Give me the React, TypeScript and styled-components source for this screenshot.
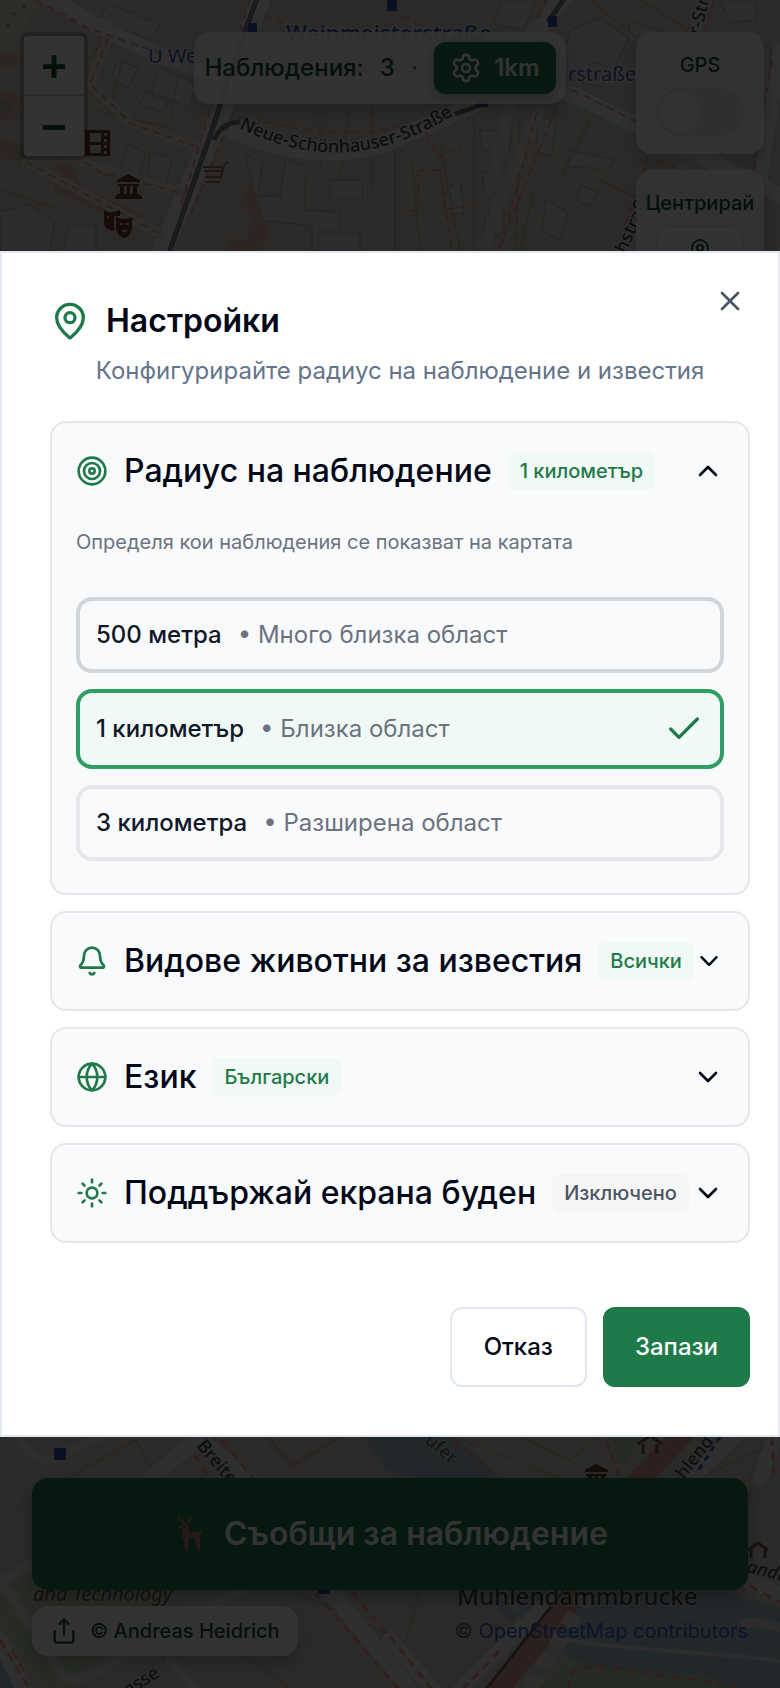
import React, { useState } from "react";
import styled, { createGlobalStyle } from "styled-components";
import {
  Bell,
  Check,
  ChevronDown,
  ChevronUp,
  Globe,
  MapPin,
  Settings,
  Share,
  Sun,
  Target,
  X,
} from "lucide-react";

const green = "#1f7a4a";

const GlobalStyle = createGlobalStyle`
  *, *::before, *::after { box-sizing: border-box; }
  body {
    margin: 0;
    color: #020817;
    font-family: Inter, "Noto Sans", sans-serif;
    font-size: 24px;
    line-height: 36px;
  }
  button { font: inherit; color: inherit; cursor: pointer; }
  h2, h3, p { margin: 0; }
`;

/* ---------- Map screen ---------- */

const Screen = styled.main`
  position: relative;
  min-height: 100vh;
  display: flex;
  flex-direction: column;
  justify-content: space-between;
  overflow: hidden;
  background: #e4dfda;
`;

const MapCanvas = styled.svg`
  position: absolute;
  inset: 0;
  width: 100%;
  height: 100%;
`;

const TopControls = styled.div`
  position: relative;
  display: grid;
  grid-template-columns: 1fr auto 1fr;
  align-items: start;
  padding: 32px 16px 0 20px;
`;

const ZoomControl = styled.div`
  justify-self: start;
  display: flex;
  flex-direction: column;
  border: 4px solid rgba(0, 0, 0, 0.2);
  border-radius: 8px;
  background-clip: padding-box;
`;

const ZoomButton = styled.button`
  width: 60px;
  height: 60px;
  padding: 8px 0 0;
  border: 0;
  background: #fff;
  color: #14532d;
  font: bold 44px/52px "Liberation Mono", monospace;

  &:first-child {
    border-bottom: 2px solid #ccc;
    border-radius: 4px 4px 0 0;
  }
  &:last-child {
    border-radius: 0 0 4px 4px;
  }
`;

const Panel = styled.div`
  border-radius: 16px;
  background: rgba(255, 255, 255, 0.88);
  color: #14532d;
  font-weight: 500;
  box-shadow: 0 8px 16px rgba(0, 0, 0, 0.2);
`;

const StatusBar = styled(Panel)`
  display: flex;
  align-items: center;
  height: 72px;
  margin-right: 24px;
  padding: 0 10px;
`;

const Count = styled.span`
  margin-left: 16px;
`;

const Dot = styled.span`
  margin: 0 16px;
  color: #64748b;
`;

const RadiusButton = styled.button`
  display: flex;
  align-items: center;
  gap: 12px;
  height: 52px;
  padding: 0 16px;
  border: 0;
  border-radius: 12px;
  background: ${green};
  color: #fff;
  font-weight: 600;
  box-shadow: 0 4px 12px rgba(0, 0, 0, 0.25);
`;

const SideControls = styled.div`
  justify-self: end;
  width: 128px;
  display: flex;
  flex-direction: column;
  gap: 16px;
`;

const SidePanel = styled(Panel)`
  display: flex;
  flex-direction: column;
  align-items: center;
  gap: 8px;
  padding: 18px 0;
  font-size: 20px;
  line-height: 30px;
`;

const GpsLabel = styled.label`
  display: flex;
  flex-direction: column;
  align-items: center;
  gap: 8px;
`;

const Toggle = styled.input`
  appearance: none;
  width: 88px;
  height: 48px;
  margin: 0;
  padding: 4px;
  border-radius: 24px;
  background: #e4e8ee;

  &::before {
    content: "";
    display: block;
    width: 40px;
    height: 40px;
    border-radius: 50%;
    background: #fff;
  }
  &:checked {
    background: ${green};
  }
  &:checked::before {
    margin-left: auto;
  }
`;

const CenterButton = styled.button`
  width: 88px;
  height: 56px;
  border: 2px solid #ececec;
  border-radius: 12px;
  background: #fff;
`;

const BottomControls = styled.div`
  position: relative;
  display: flex;
  flex-direction: column;
  gap: 16px;
  padding: 0 32px 32px;
`;

const ReportButton = styled.button`
  display: flex;
  align-items: center;
  justify-content: center;
  gap: 12px;
  height: 112px;
  border: 0;
  border-radius: 16px;
  background: ${green};
  color: #fff;
  font-size: 32px;
  font-weight: 600;
  box-shadow: 0 8px 16px rgba(0, 0, 0, 0.25);
`;

const Credits = styled.div`
  display: flex;
  align-items: center;
  justify-content: space-between;
  font-size: 20px;
  line-height: 30px;
`;

const Author = styled(Panel)`
  display: flex;
  align-items: center;
  gap: 12px;
  height: 50px;
  padding: 0 18px;
`;

const MapCredit = styled.span`
  color: #666;

  a {
    color: #3b62c8;
    text-decoration: none;
  }
`;

/* ---------- Dialog ---------- */

const Backdrop = styled.div`
  position: fixed;
  inset: 0;
  display: flex;
  align-items: center;
  background: rgba(0, 0, 0, 0.8);
`;

const Dialog = styled.section`
  position: relative;
  width: 100%;
  max-height: 100%;
  overflow: auto;
  display: flex;
  flex-direction: column;
  padding: 48px 28px 48px 48px;
  border: 2px solid #e2e8f0;
  background: #fff;
`;

const CloseButton = styled.button`
  position: absolute;
  top: 32px;
  right: 32px;
  display: flex;
  padding: 0;
  border: 0;
  background: none;
  color: #4b5563;
`;

const DialogHeader = styled.header`
  display: flex;
  flex-direction: column;
  gap: 12px;
  margin-bottom: 32px;
`;

const DialogTitle = styled.h2`
  display: flex;
  align-items: center;
  gap: 16px;
  font-size: 32px;
  line-height: 40px;
  font-weight: 600;

  svg {
    color: ${green};
  }
`;

const DialogText = styled.p`
  color: #64748b;
  text-align: center;
`;

const Sections = styled.div`
  display: flex;
  flex-direction: column;
  gap: 16px;
`;

const Card = styled.section`
  border: 2px solid #e5e7eb;
  border-radius: 16px;
  background: #f9fafc;
`;

const CardHeader = styled.button`
  display: flex;
  align-items: center;
  width: 100%;
  height: 96px;
  padding: 0 24px;
  border: 0;
  background: none;
  text-align: left;
`;

const CardIcon = styled.span`
  display: flex;
  margin-right: 16px;
  color: ${green};
`;

const CardTitle = styled.span`
  font-size: 32px;
  line-height: 48px;
  font-weight: 500;
  white-space: nowrap;
`;

const Badge = styled.span<{ $muted?: boolean }>`
  margin: 0 auto 0 16px;
  padding: 4px 12px;
  border-radius: 8px;
  background: ${(p) => (p.$muted ? "#f5f5f5" : "#f0f9f6")};
  color: ${(p) => (p.$muted ? "#4b5563" : green)};
  font-size: 20px;
  line-height: 30px;
  font-weight: 500;
  white-space: nowrap;
`;

const CardBody = styled.div`
  padding: 8px 24px 32px;
`;

const Hint = styled.p`
  margin-bottom: 40px;
  color: #6b7280;
  font-size: 20px;
  line-height: 30px;
`;

const Options = styled.div`
  display: flex;
  flex-direction: column;
  gap: 16px;
`;

const Option = styled.button<{ $state: "focus" | "selected" | "idle" }>`
  display: flex;
  align-items: center;
  gap: 16px;
  padding: 16px;
  border: 4px solid
    ${(p) => ({ focus: "#d0d6da", selected: "#2f9e62", idle: "#e5e7eb" })[p.$state]};
  border-radius: 16px;
  background: ${(p) => (p.$state === "selected" ? "#f0f9f6" : "transparent")};
  color: #111827;
  text-align: left;

  svg {
    margin-left: auto;
    color: ${green};
  }
`;

const OptionName = styled.span`
  font-weight: 500;
`;

const OptionNote = styled.span`
  color: #6b7280;
`;

const DialogFooter = styled.footer`
  display: flex;
  justify-content: flex-end;
  gap: 16px;
  margin-top: 64px;
`;

const Button = styled.button<{ $primary?: boolean }>`
  height: 80px;
  padding: 0 32px;
  border: ${(p) => (p.$primary ? "0" : "2px solid #e2e8f0")};
  border-radius: 12px;
  background: ${(p) => (p.$primary ? green : "#fff")};
  color: ${(p) => (p.$primary ? "#f8fafc" : "#020817")};
  font-weight: 500;
`;

/* ---------- Drawings ---------- */

function Deer() {
  return (
    <svg width="40" height="40" viewBox="0 0 40 40" aria-hidden="true">
      <g fill="none" stroke="#b08078" strokeWidth="1.6" strokeLinecap="round">
        <path d="M13 10 C9 9 8 6 7 2 M9 7 L6 5 M14 10 C17 8 18 5 19 2 M16 8 L20 6 M11 10 L11 5" />
      </g>
      <path
        d="M8 12 l4-2 4 1 1 3 0 4 c4 1 8-1 10 1 l2-3 1 2 -2 4 c1 2 0 4 0 6 l0 9 h-3 l-1-9 -2-4 -5 0 -1 5 0 8 h-3 l-1-11 c-2-3-3-7-1-11 l-4-1 z"
        fill="#c47c6c"
      />
      <circle cx="12" cy="13" r="1" fill="#2b1610" />
    </svg>
  );
}

function Museum({ x, y }: { x: number; y: number }) {
  return (
    <g transform={`translate(${x} ${y})`} fill="#6b3f2a">
      <path d="M2 7 L13 1 L25 7 V9 H2 Z M3 11 h21 v2 H3 Z M5 13 h4 v8 H5 Z M12 13 h3 v8 h-3 Z M18 13 h4 v8 h-4 Z M2 21 h23 v2 H2 Z M0 23 h27 v3 H0 Z" />
    </g>
  );
}

function CityMap() {
  return (
    <MapCanvas viewBox="0 0 780 1688" preserveAspectRatio="xMidYMid slice" aria-hidden="true">
      <defs>
        <path id="neue" d="M239 128 C300 158 370 168 455 114" />
      </defs>
      <rect width="780" height="1688" fill="#d9d0c9" />

      {/* courtyards and lots, north */}
      <g fill="#dfdddb" stroke="#c3b7ac" strokeWidth="1.5">
        <path d="M108 4 L160 24 L150 40 L98 20 Z M118 60 L138 68 L128 88 L112 78 Z M160 68 L196 84 L190 108 L152 92 Z M146 92 L168 102 L162 112 L140 104 Z M128 145 L146 152 L138 178 L120 172 Z M150 152 L172 158 L166 184 L148 176 Z" />
        <path d="M0 212 L28 204 L54 222 L50 251 H0 Z M70 224 H96 V251 H62 Z M245 155 L262 162 L258 196 L280 196 L286 160 L306 166 L304 210 L340 212 L338 251 H312 V226 L262 220 L252 180 Z" />
        <path d="M480 130 L512 132 L508 156 L482 150 Z M482 172 L512 174 V188 L500 196 L484 190 Z M486 216 L504 210 V232 L484 240 Z M538 120 L556 118 L552 156 L536 152 Z M570 150 L614 160 L608 170 L568 166 Z M582 186 L598 192 L590 206 L576 200 Z M546 200 L568 212 L560 240 L542 232 Z" />
        <path d="M570 30 L600 18 L628 38 L612 74 L560 70 Z M590 62 L608 66 L602 86 L582 84 Z M630 22 L660 30 L652 48 L628 42 Z M720 0 H756 V20 L730 22 Z M502 0 H536 L524 30 L494 24 Z" />
        <path d="M716 48 H770 V100 H716 Z M330 180 H362 V200 H330 Z M318 232 H360 V251 H318 Z M460 180 C446 186 442 200 446 214 H464 Z" />
      </g>
      <g fill="none" stroke="#c3b7ac" strokeWidth="1.5">
        <path d="M20 60 L84 84 M92 110 L170 128 M110 30 L60 100 M36 130 L90 150 M0 190 L60 210 M122 60 L110 110 M180 60 L170 124 M320 110 V175 M350 108 L340 174 M372 106 V190 M395 150 V251 M412 160 L420 251 M440 140 L460 251 M474 120 V251 M520 120 L516 251 M560 90 L640 130 M600 100 L560 180 M600 180 L640 200 M534 190 L520 251 M590 0 L640 40 M640 0 L690 30" />
      </g>

      {/* pedestrian areas */}
      <g fill="#dfb9ac">
        <path d="M56 160 L76 166 L80 186 L124 206 L142 214 L136 226 L100 212 L54 192 Z M0 54 L18 54 L16 66 H0 Z M0 92 Q24 88 20 118 L0 122 Z M0 140 L22 144 L26 162 L0 158 Z" />
        <path d="M250 180 L262 212 L270 234 L262 251 H226 L230 238 L246 240 L252 216 L240 206 Z M86 82 L98 86 L92 102 Z" />
      </g>
      <path d="M0 0 H40 L12 50 L0 52 Z" fill="#dee4cf" />
      <g fill="#8fbf8f">
        <circle cx="6" cy="106" r="6" opacity=".5" />
        <circle cx="20" cy="156" r="6" opacity=".5" />
        <circle cx="24" cy="6" r="2" />
        <circle cx="14" cy="14" r="2" />
        <circle cx="8" cy="26" r="2" />
      </g>

      {/* streets, north */}
      <g fill="none" stroke="#ededed" strokeLinecap="round">
        <path d="M44 -4 C90 20 120 42 200 70 S500 60 580 98 L650 132 L790 200" strokeWidth="16" />
        <path d="M262 -4 L240 50 L222 110 L160 256" strokeWidth="20" />
        <path d="M215 122 Q300 166 380 146 L476 104 L565 -4" strokeWidth="17" />
        <path d="M108 38 L90 84 L132 124 L200 148 M26 162 L160 234 M84 162 L186 194" strokeWidth="9" stroke="#e4e0dd" />
        <path d="M510 100 L490 190 M540 110 L500 200 L484 251 M708 -4 L690 40 M690 160 L630 251" strokeWidth="11" stroke="#e4e0dd" />
        <path d="M780 50 L758 200" strokeWidth="13" />
      </g>
      <g fill="none" stroke="#ee9c8e" strokeWidth="2" strokeDasharray="8 5">
        <path d="M36 0 L88 28 L180 60 M108 38 L90 84 L132 124 L200 148 M26 162 L160 234 M84 162 L100 172 L186 194 M60 152 L62 170" />
        <path d="M250 0 L238 36 M210 110 L180 210 M234 112 L190 216 M240 116 C300 130 350 140 400 126 M560 84 L650 128 M540 100 L500 251 M556 108 L498 251" />
        <path d="M426 132 L438 158 L462 146 M418 170 H440 L452 251 M418 170 V210 L404 212 M444 210 L480 204 M264 16 L310 32 M402 16 L430 30 M538 18 L546 0 M700 0 L684 40 M714 0 L704 36 M772 60 L752 180 M648 156 L624 230 M656 160 L720 186" />
      </g>
      <g fill="none" stroke="#7c7a78" strokeWidth="5">
        <path d="M258 -4 L240 44 L214 124 L168 256 M214 140 Q222 122 240 122 M455 114 L484 104 M566 -4 L548 22" />
        <path d="M258 -4 L240 44 L214 124 L168 256" stroke="#a5a3a1" strokeWidth="1" />
      </g>

      {/* points of interest, north */}
      <g fill="#6b3f2a">
        <path d="M85 130 h25 v26 h-25 Z" />
        <path d="M90 133 h11 v9 h-11 Z M90 145 h11 v8 h-11 Z M104 133 h3 v3 h-3 Z M104 139 h3 v3 h-3 Z M104 145 h3 v3 h-3 Z M104 151 h3 v3 h-3 Z" fill="#d9d0c9" />
        <path d="M104 210 L107 212 Q112 213 120 210 V216 H114 V231 Q104 230 104 222 Z M116 217 Q124 221 132 217 V228 Q130 238 124 238 Q117 236 116 228 Z" />
        <path d="M107 216 h2 v2 h-2 Z M120 223 h3 v2 h-3 Z M126 223 h3 v2 h-3 Z M121 230 h7 q-3 5-7 0 Z" fill="#d9d0c9" />
      </g>
      <Museum x={115} y={173} />
      <path d="M228 162 l-4 3 -3 12 h-15 M203 167 h19 M204 171 h18 M206 182 h14" fill="none" stroke="#8e7a68" strokeWidth="2" />
      <g fill="#3656b4">
        <rect x="248" y="23" width="9" height="10" />
        <rect x="548" y="16" width="9" height="11" />
        <rect x="387" y="0" width="10" height="11" />
        <rect x="476" y="100" width="12" height="7" />
      </g>

      {/* labels, north */}
      <g fontFamily="Noto Sans, sans-serif" stroke="#eee" strokeWidth="3" paintOrder="stroke">
        <g fill="#3f5cae" fontSize="20">
          <text x="286" y="41" fontSize="22" fontWeight="600">Weinmeisterstraße</text>
          <text x="148" y="63">U We</text>
          <text x="568" y="81">rstraße</text>
        </g>
        <g fill="#444" fontSize="18" fontWeight="500">
          <text>
            <textPath href="#neue">Neue-Schönhauser-Straße</textPath>
          </text>
          <text transform="translate(700 36) rotate(-75)">r-Str</text>
          <text transform="translate(622 262) rotate(-66)">chstraße</text>
        </g>
      </g>

      {/* south: ground, water and parks */}
      <path d="M0 1437 H18 L36 1470 L66 1474 L32 1500 L0 1516 Z" fill="#cfd3db" />
      <path d="M0 1590 L40 1565 L180 1590 L120 1640 L60 1688 H44 L0 1620 Z" fill="#c2d3b8" />
      <path d="M0 1650 L18 1688 H0 Z M360 1430 H450 L500 1478 L460 1490 L385 1470 Z M490 1590 H720 L780 1608 V1688 H720 L610 1672 L568 1658 Z M486 1590 L512 1624 L520 1610 L506 1590 Z" fill="#a9c6d2" />
      <path d="M570 1658 L600 1668 L710 1676 L728 1688 H540 Z M610 1430 H642 L626 1466 L616 1460 Z" fill="#bfd2b2" />
      <path d="M566 1640 C640 1652 720 1652 780 1661" fill="none" stroke="#ddd" strokeWidth="4" />
      <path d="M740 1624 Q760 1620 780 1628" fill="none" stroke="#ddd" strokeWidth="9" />
      <g fill="none" stroke="#c3b7ac" strokeWidth="1.5">
        <path d="M136 1440 L154 1474 M10 1510 L136 1440 M170 1600 L290 1688 M290 1590 L400 1640 M420 1590 L400 1660 M456 1437 L560 1478 M520 1437 L570 1460 L600 1437 M700 1478 L780 1440 M750 1470 V1500" />
      </g>

      {/* streets, south */}
      <g fill="none" stroke="#ebe9e8" strokeLinecap="round">
        <path d="M14 1428 Q36 1478 70 1450 L120 1428 M-6 1586 L60 1546 M0 1580 L64 1676 Q80 1684 110 1664 L260 1580 M170 1660 L196 1690" strokeWidth="9" stroke="#e6e3e0" />
        <path d="M190 1430 L260 1490 L330 1590 L410 1690 M206 1430 L150 1480 M0 1640 L24 1690" strokeWidth="16" />
        <path d="M390 1640 L434 1690 M460 1690 L560 1590 M740 1430 L680 1490 M748 1580 L790 1600 M778 1430 L760 1478" strokeWidth="15" />
      </g>
      <path d="M496 1692 L580 1590 M630 1490 L690 1426" fill="none" stroke="#d9a196" strokeWidth="22" />
      <path d="M484 1692 L564 1590" fill="none" stroke="#6b635c" strokeWidth="3" />
      <path d="M530 1688 L590 1590" fill="none" stroke="#e8dedb" strokeWidth="16" strokeDasharray="14 10" />
      <g fill="none" stroke="#ee9c8e" strokeWidth="3" strokeDasharray="9 6">
        <path d="M194 1454 L210 1478 M222 1440 L256 1482 M314 1592 L400 1690 M352 1592 L392 1640 M390 1636 L432 1690 M0 1640 L30 1690 M12 1650 L26 1676 M462 1690 L500 1650 M452 1440 L500 1478 M606 1440 L620 1478 M668 1437 L626 1480 M772 1437 L774 1476 M570 1690 C560 1650 620 1672 700 1680 L740 1688 M750 1586 L780 1602" />
      </g>
      <path d="M720 1437 L696 1474" fill="none" stroke="#2a62e8" strokeWidth="3" strokeDasharray="6 5" />
      <path d="M268 1437 L292 1466 L340 1437" fill="none" stroke="#dbb3ab" strokeWidth="4" />
      <g fill="#3656b4">
        <rect x="54" y="1448" width="12" height="12" />
        <rect x="318" y="1586" width="12" height="8" />
      </g>
      <Museum x={583} y={1463} />
      <path d="M638 1444 L650 1436 L662 1444 M643 1444 V1454 M657 1444 V1454 M748 1550 L758 1543 L768 1550 M751 1550 V1558 M765 1550 V1558" fill="none" stroke="#6a5c50" strokeWidth="3" />

      {/* labels, south */}
      <g fontFamily="Noto Sans, sans-serif" stroke="#ddd" strokeWidth="2" paintOrder="stroke" fill="#444">
        <text x="457" y="1605" fontSize="24" fontWeight="500">Mühlendammbrücke</text>
        <text x="33" y="1601" fontSize="20" fontStyle="italic" fill="#6b5540">and Technology</text>
        <g fontSize="18" fontWeight="500">
          <text transform="translate(196 1446) rotate(50)">Breite</text>
          <text transform="translate(424 1442) rotate(40)" fill="#666">ufer</text>
          <text transform="translate(122 1700) rotate(-32)">rasse</text>
          <text transform="translate(684 1480) rotate(-52)">hlend</text>
          <text transform="translate(746 1572) rotate(14)" fontStyle="italic">andu</text>
        </g>
      </g>
    </MapCanvas>
  );
}

/* ---------- Data ---------- */

const radii = [
  { id: "500m", name: "500 метра", note: "Много близка област" },
  { id: "1km", name: "1 километър", note: "Близка област" },
  { id: "3km", name: "3 километра", note: "Разширена област" },
];

const moreSections = [
  { icon: Bell, title: "Видове животни за известия", badge: "Всички", muted: false },
  { icon: Globe, title: "Език", badge: "Български", muted: false },
  { icon: Sun, title: "Поддържай екрана буден", badge: "Изключено", muted: true },
];

export default function App() {
  const [radius, setRadius] = useState("1km");
  const [expanded, setExpanded] = useState(true);
  const current = radii.find((r) => r.id === radius) ?? radii[1];

  return (
    <>
      <GlobalStyle />
      <Screen>
        <CityMap />
        <TopControls>
          <ZoomControl>
            <ZoomButton aria-label="Увеличи">+</ZoomButton>
            <ZoomButton aria-label="Намали">−</ZoomButton>
          </ZoomControl>
          <StatusBar>
            <span>Наблюдения:</span>
            <Count>3</Count>
            <Dot>·</Dot>
            <RadiusButton>
              <Settings size={32} />
              1km
            </RadiusButton>
          </StatusBar>
          <SideControls>
            <SidePanel>
              <GpsLabel>
                GPS
                <Toggle type="checkbox" role="switch" />
              </GpsLabel>
            </SidePanel>
            <SidePanel>
              Центрирай
              <CenterButton aria-label="Центрирай">
                <MapPin size={24} />
              </CenterButton>
            </SidePanel>
          </SideControls>
        </TopControls>
        <BottomControls>
          <ReportButton>
            <Deer />
            Съобщи за наблюдение
          </ReportButton>
          <Credits>
            <Author>
              <Share size={28} />
              © Andreas Heidrich
            </Author>
            <MapCredit>
              © <a href="#osm">OpenStreetMap contributors</a>
            </MapCredit>
          </Credits>
        </BottomControls>
      </Screen>

      <Backdrop>
        <Dialog role="dialog" aria-modal="true" aria-labelledby="settings-title">
          <DialogHeader>
            <DialogTitle id="settings-title">
              <MapPin size={40} />
              Настройки
            </DialogTitle>
            <DialogText>Конфигурирайте радиус на наблюдение и известия</DialogText>
          </DialogHeader>
          <Sections>
            <Card>
              <CardHeader aria-expanded={expanded} onClick={() => setExpanded(!expanded)}>
                <CardIcon>
                  <Target size={32} />
                </CardIcon>
                <CardTitle>Радиус на наблюдение</CardTitle>
                <Badge>{current.name}</Badge>
                {expanded ? <ChevronUp size={32} /> : <ChevronDown size={32} />}
              </CardHeader>
              {expanded && (
                <CardBody>
                  <Hint>Определя кои наблюдения се показват на картата</Hint>
                  <Options>
                    {radii.map((r, i) => (
                      <Option
                        key={r.id}
                        aria-pressed={r.id === radius}
                        $state={r.id === radius ? "selected" : i === 0 ? "focus" : "idle"}
                        onClick={() => setRadius(r.id)}
                      >
                        <OptionName>{r.name}</OptionName>
                        <OptionNote>• {r.note}</OptionNote>
                        {r.id === radius && <Check size={40} />}
                      </Option>
                    ))}
                  </Options>
                </CardBody>
              )}
            </Card>
            {moreSections.map(({ icon: Icon, title, badge, muted }) => (
              <Card key={title}>
                <CardHeader aria-expanded={false}>
                  <CardIcon>
                    <Icon size={32} />
                  </CardIcon>
                  <CardTitle>{title}</CardTitle>
                  <Badge $muted={muted}>{badge}</Badge>
                  <ChevronDown size={32} />
                </CardHeader>
              </Card>
            ))}
          </Sections>
          <DialogFooter>
            <Button>Отказ</Button>
            <Button $primary>Запази</Button>
          </DialogFooter>
          <CloseButton aria-label="Затвори">
            <X size={32} />
          </CloseButton>
        </Dialog>
      </Backdrop>
    </>
  );
}
